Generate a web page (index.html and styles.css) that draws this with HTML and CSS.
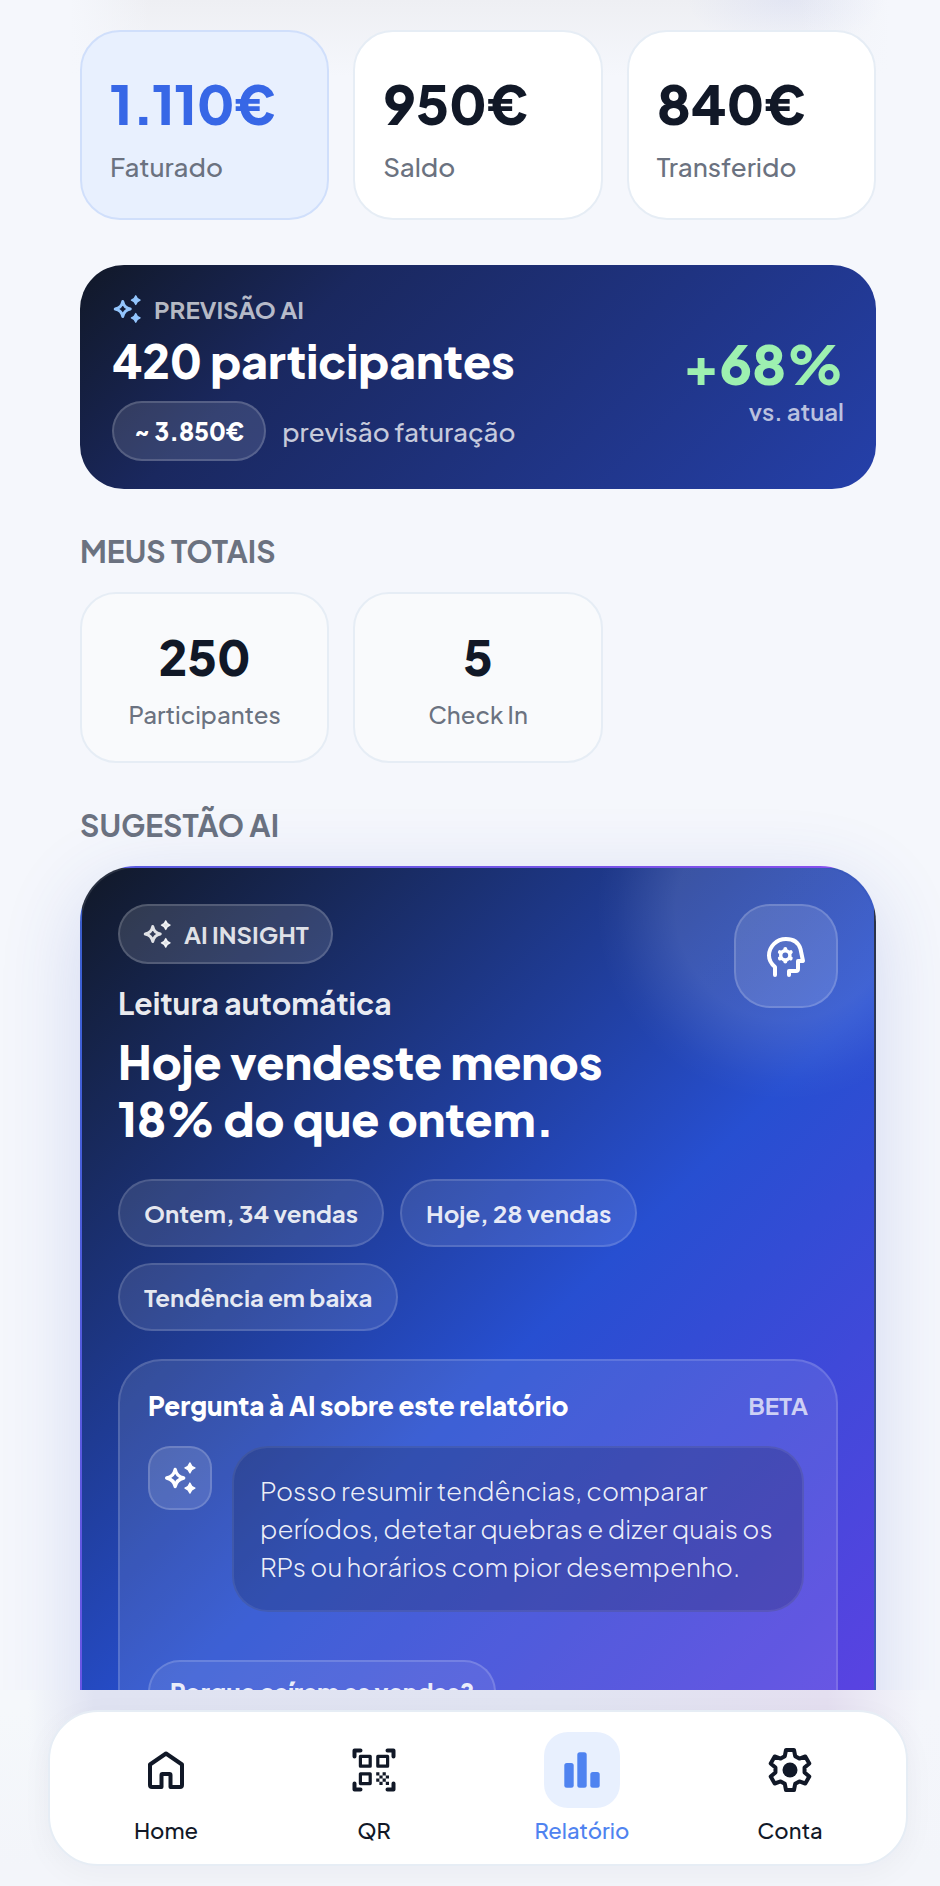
FILE: index.html
```html
<!DOCTYPE html>
<html lang="pt">
<head>
  <meta charset="UTF-8" />
  <meta name="viewport" content="width=device-width, initial-scale=1.0"/>
  <title>Relatório</title>
  <link rel="stylesheet" href="styles.css">
</head>
<body>

  <svg class="sprite" aria-hidden="true">
    <symbol id="sparkles" viewBox="0 0 24 24">
      <path d="M8.6 6 Q9.6 11 14.6 12 Q9.6 13 8.6 18 Q7.6 13 2.6 12 Q7.6 11 8.6 6Z" fill="none" stroke="currentColor" stroke-width="2.4" stroke-linejoin="round"/>
      <path d="M19 1.4 Q19.8 4.1 22.5 4.9 Q19.8 5.7 19 8.4 Q18.2 5.7 15.5 4.9 Q18.2 4.1 19 1.4Z M19 15.6 Q19.8 18.3 22.5 19.1 Q19.8 19.9 19 22.6 Q18.2 19.9 15.5 19.1 Q18.2 18.3 19 15.6Z" fill="currentColor" stroke="currentColor" stroke-width="1" stroke-linejoin="round"/>
    </symbol>
  </svg>

  <main class="content">
    <section class="stats">
      <div class="stat active">
        <strong>1.110€</strong>
        <span>Faturado</span>
      </div>
      <div class="stat">
        <strong>950€</strong>
        <span>Saldo</span>
      </div>
      <div class="stat">
        <strong>840€</strong>
        <span>Transferido</span>
      </div>
    </section>

    <section class="forecast">
      <div class="forecast-main">
        <div class="forecast-label">
          <svg class="icon-sm"><use href="#sparkles"/></svg>
          PREVISÃO AI
        </div>
        <div class="forecast-title">420 participantes</div>
        <div class="forecast-row">
          <span class="money">~ 3.850€</span>
          <span class="forecast-note">previsão faturação</span>
        </div>
      </div>
      <div class="forecast-side">
        <strong>+68%</strong>
        <span>vs. atual</span>
      </div>
    </section>

    <h2 class="section-title">MEUS TOTAIS</h2>
    <section class="totals">
      <div class="total">
        <strong>250</strong>
        <span>Participantes</span>
      </div>
      <div class="total">
        <strong>5</strong>
        <span>Check In</span>
      </div>
    </section>

    <h2 class="section-title">SUGESTÃO AI</h2>
    <section class="insight">
      <div class="insight-head">
        <div class="insight-text">
          <span class="insight-tag">
            <svg class="icon-sm"><use href="#sparkles"/></svg>
            AI INSIGHT
          </span>
          <p class="insight-sub">Leitura automática</p>
          <h3>Hoje vendeste menos 18% do que ontem.</h3>
        </div>
        <div class="insight-icon">
          <svg viewBox="0 0 50 50" fill="none" stroke="#fff" stroke-width="4" stroke-linecap="round" stroke-linejoin="round">
            <path d="M14 44V36Q8 31 8 24.500A17 16.500 0 0 1 25 8Q36.500 8 39.500 18L42 30H37V38Q37 40 35 40H28V44"/>
            <circle cx="24.300" cy="24.300" r="4.600" stroke-width="3.400"/>
            <path stroke-width="4" d="M24.300 18.300V18M24.300 30.300V30.600M19.100 21.300L18.900 21.200M29.500 21.300L29.700 21.200M19.100 27.300L18.900 27.400M29.500 27.300L29.700 27.400"/>
          </svg>
        </div>
      </div>

      <div class="chips">
        <span class="chip">Ontem, 34 vendas</span>
        <span class="chip">Hoje, 28 vendas</span>
        <span class="chip">Tendência em baixa</span>
      </div>

      <div class="ask">
        <div class="ask-head">
          <strong>Pergunta à AI sobre este relatório</strong>
          <span>BETA</span>
        </div>
        <div class="chat">
          <div class="avatar">
            <svg class="icon-md"><use href="#sparkles"/></svg>
          </div>
          <p class="bubble">Posso resumir tendências, comparar períodos, detetar quebras e dizer quais os RPs ou horários com pior desempenho.</p>
        </div>
        <button type="button" class="question">Porque caíram as vendas?</button>
      </div>
    </section>
  </main>

  <footer class="bottom">
    <nav class="nav">
      <a href="#home">
        <span class="nav-icon">
          <svg viewBox="0 0 48 48" fill="none" stroke="currentColor" stroke-width="4" stroke-linejoin="round">
            <path d="M8 18.500L24 7.500L40 18.500V39Q40 41 38 41H28.500V29Q28.500 28 27.500 28H20.500Q19.500 28 19.500 29V41H10Q8 41 8 39Z"/>
          </svg>
        </span>
        Home
      </a>
      <a href="#qr">
        <span class="nav-icon">
          <svg viewBox="0 0 48 48" fill="none" stroke="currentColor" stroke-width="4" stroke-linecap="round" stroke-linejoin="round">
            <path d="M4.500 10.500V4.500H10.500M37.500 4.500H43.500V10.500M43.500 37.500V43.500H37.500M10.500 43.500H4.500V37.500"/>
            <g stroke-width="3.200">
              <rect x="10.400" y="10.400" width="9.800" height="9.800"/>
              <rect x="27.800" y="10.400" width="9.800" height="9.800"/>
              <rect x="10.400" y="27.800" width="9.800" height="9.800"/>
            </g>
            <path stroke="none" fill="currentColor" d="M26.200 26.200h3.200v3.200h-3.200zM32.600 26.200h3.200v3.200h-3.200zM29.400 29.400h3.200v3.200h-3.200zM35.800 29.400h3.200v3.200h-3.200zM26.200 32.600h3.200v3.200h-3.200zM32.600 32.600h3.200v3.200h-3.200zM29.400 35.800h3.200v3.200h-3.200zM35.800 35.800h3.200v3.200h-3.200z"/>
          </svg>
        </span>
        QR
      </a>
      <a href="#relatorio" class="current">
        <span class="nav-icon">
          <svg viewBox="0 0 48 48" fill="currentColor">
            <rect x="6.300" y="17" width="9.400" height="24.700" rx="2.500"/>
            <rect x="19.300" y="6.300" width="9.400" height="35.400" rx="2.500"/>
            <rect x="32.300" y="26" width="9.400" height="15.700" rx="2.500"/>
          </svg>
        </span>
        Relatório
      </a>
      <a href="#conta">
        <span class="nav-icon">
          <svg viewBox="-24 -24 48 48" fill="none" stroke="currentColor" stroke-width="4" stroke-linejoin="round">
            <path d="M-4 -20H4L5.200 -13.800L9.350 -11.400L15.300 -13.500L19.300 -6.500L14.550 -2.400V2.400L19.300 6.500L15.300 13.500L9.350 11.400L5.200 13.800L4 20H-4L-5.200 13.800L-9.350 11.400L-15.300 13.500L-19.300 6.500L-14.550 2.400V-2.400L-19.300 -6.500L-15.300 -13.500L-9.350 -11.400L-5.200 -13.800Z"/>
            <circle r="7.500" fill="currentColor" stroke="none"/>
          </svg>
        </span>
        Conta
      </a>
    </nav>
  </footer>

</body>
</html>
```

FILE: styles.css
```css
* {
  box-sizing: border-box;
}

body {
  display: flex;
  flex-direction: column;
  margin: 0;
  height: 100vh;
  overflow: hidden;
  font-family: "Plus Jakarta Sans", Inter, sans-serif;
  background: #f5f7fc;
  color: #111827;
}

h2, h3, p {
  margin: 0;
}

.sprite {
  display: none;
}

.content {
  flex: 1;
  min-height: 0;
  padding: 30px 64px 60px 80px;
  overflow-y: auto;
  scrollbar-width: none;
  background:
    radial-gradient(ellipse 100px 48px at 786px 0, rgba(80, 110, 240, 0.07), transparent),
    linear-gradient(90deg, #f5f7fc 70px, transparent 150px, transparent 800px, #f5f7fc 890px) 0 0 / 100% 76px no-repeat,
    linear-gradient(#eeeff3, #f5f7fc) 0 0 / 100% 76px no-repeat;
}

/* top numbers */

.stats,
.totals {
  display: grid;
  grid-template-columns: repeat(3, 1fr);
  gap: 24px;
}

.stat {
  display: flex;
  flex-direction: column;
  gap: 12px;
  padding: 35px 28px;
  border: 2px solid #e6edf5;
  border-radius: 40px;
  background: #fff;
}

.stat strong {
  font-size: 54px;
  font-weight: 800;
  line-height: 72px;
}

.stat span {
  font-size: 26px;
  font-weight: 500;
  line-height: 32px;
  color: #6b7280;
}

.stat.active {
  background: #e8f0fe;
  border-color: #d0dffb;
}

.stat.active strong {
  color: #3767e6;
}

/* forecast */

.forecast {
  display: flex;
  justify-content: space-between;
  align-items: center;
  margin-top: 45px;
  padding: 28px 32px;
  border-radius: 44px;
  background: linear-gradient(135deg, #111827, #1a285f 28%, #2540aa);
  color: #fff;
}

.forecast-label {
  display: flex;
  align-items: center;
  gap: 12px;
  font-size: 24px;
  font-weight: 700;
  line-height: 32px;
  color: rgba(255, 255, 255, 0.7);
}

.icon-sm {
  width: 30px;
  height: 30px;
}

.icon-md {
  width: 34px;
  height: 34px;
}

.forecast-label svg {
  color: #93c5fd;
}

.forecast-title {
  margin-top: 4px;
  font-size: 46px;
  font-weight: 800;
  line-height: 62px;
}

.forecast-row {
  display: flex;
  align-items: center;
  gap: 16px;
  margin-top: 10px;
}

.money {
  padding: 0 20px;
  border: 2px solid rgba(255, 255, 255, 0.16);
  border-radius: 30px;
  background: rgba(255, 255, 255, 0.12);
  font-size: 24px;
  font-weight: 800;
  line-height: 56px;
}

.forecast-note {
  font-size: 26px;
  font-weight: 500;
  color: rgba(255, 255, 255, 0.75);
}

.forecast-side {
  display: flex;
  flex-direction: column;
  gap: 4px;
  padding-top: 8px;
  text-align: right;
}

.forecast-side strong {
  font-size: 54px;
  font-weight: 800;
  line-height: 56px;
  color: #9df0b0;
}

.forecast-side span {
  font-size: 24px;
  font-weight: 600;
  line-height: 32px;
  color: rgba(255, 255, 255, 0.7);
}

/* totals */

.section-title {
  margin: 42px 0 21px;
  font-size: 30px;
  font-weight: 700;
  line-height: 40px;
  color: #6b7280;
}

.total {
  display: flex;
  flex-direction: column;
  gap: 12px;
  padding: 33px 12px 32px;
  border: 2px solid #e6edf5;
  border-radius: 36px;
  background: #f9fafc;
  text-align: center;
}

.total strong {
  font-size: 48px;
  font-weight: 800;
  line-height: 60px;
}

.total span {
  font-size: 24px;
  font-weight: 500;
  line-height: 30px;
  color: #6b7280;
}

/* AI card */

.insight {
  position: relative;
  min-height: 1300px;
  padding: 36px;
  border: 2px solid rgba(255, 255, 255, 0.1);
  border-radius: 56px;
  background: linear-gradient(135deg, #111827, #274fd1 44%, #7c3aed);
  box-shadow: 0 20px 80px rgba(50, 75, 190, 0.18);
  color: #fff;
}

/* soft light in the corner */
.insight::before {
  content: "";
  position: absolute;
  inset: 0;
  border-radius: 54px;
  background: radial-gradient(circle at calc(100% - 88px) 42px, rgba(255, 255, 255, 0.12) 110px, rgba(255, 255, 255, 0.07) 140px, rgba(255, 255, 255, 0.02) 170px, transparent 190px);
}

.insight > * {
  position: relative;
}

.insight-head {
  display: flex;
  justify-content: space-between;
  align-items: flex-start;
}

.insight-text {
  max-width: 540px;
}

.insight-tag {
  display: inline-flex;
  align-items: center;
  gap: 12px;
  padding: 0 22px;
  border: 2px solid rgba(255, 255, 255, 0.16);
  border-radius: 30px;
  background: rgba(255, 255, 255, 0.13);
  font-size: 24px;
  font-weight: 700;
  line-height: 56px;
  color: rgba(255, 255, 255, 0.85);
  vertical-align: top;
}

.insight-sub {
  margin-top: 19px;
  font-size: 30px;
  font-weight: 700;
  line-height: 40px;
  color: rgba(255, 255, 255, 0.92);
}

.insight h3 {
  margin-top: 10px;
  font-size: 46px;
  font-weight: 800;
  line-height: 57px;
}

.insight-icon {
  display: flex;
  align-items: center;
  justify-content: center;
  width: 104px;
  height: 104px;
  border: 2px solid rgba(255, 255, 255, 0.16);
  border-radius: 36px;
  background: rgba(255, 255, 255, 0.12);
}

.insight-icon svg {
  width: 50px;
  height: 50px;
}

.chips {
  display: flex;
  flex-wrap: wrap;
  gap: 16px;
  margin-top: 32px;
}

.chip {
  padding: 0 24px;
  border: 2px solid rgba(255, 255, 255, 0.14);
  border-radius: 34px;
  background: rgba(255, 255, 255, 0.1);
  font-size: 24px;
  font-weight: 700;
  line-height: 64px;
  color: rgba(255, 255, 255, 0.88);
}

.ask {
  margin-top: 28px;
  padding: 24px 28px 28px;
  min-height: 600px;
  border: 2px solid rgba(255, 255, 255, 0.14);
  border-radius: 44px;
  background: rgba(255, 255, 255, 0.1);
}

.ask-head {
  display: flex;
  justify-content: space-between;
  line-height: 41px;
}

.ask-head strong {
  font-size: 26px;
  font-weight: 800;
}

.ask-head span {
  font-size: 24px;
  font-weight: 700;
  color: rgba(255, 255, 255, 0.72);
}

.chat {
  display: flex;
  align-items: flex-start;
  gap: 20px;
  margin: 20px 4px 48px 0;
}

.avatar {
  display: flex;
  flex: none;
  align-items: center;
  justify-content: center;
  width: 64px;
  height: 64px;
  border: 2px solid rgba(255, 255, 255, 0.16);
  border-radius: 22px;
  background: rgba(255, 255, 255, 0.13);
}

.bubble {
  padding: 24px 26px;
  border: 2px solid rgba(255, 255, 255, 0.08);
  border-radius: 36px;
  background: rgba(17, 24, 60, 0.24);
  font-size: 26px;
  font-weight: 300;
  line-height: 38px;
  color: rgba(255, 255, 255, 0.92);
}

.question {
  height: 64px;
  padding: 0 20px;
  border: 2px solid rgba(255, 255, 255, 0.16);
  border-radius: 32px;
  background: rgba(255, 255, 255, 0.08);
  font-family: inherit;
  font-size: 24px;
  font-weight: 800;
  color: rgba(255, 255, 255, 0.88);
  cursor: pointer;
}

/* bottom navigation */

.bottom {
  flex: none;
  padding: 20px 32px 20px 48px;
  background:
    linear-gradient(rgba(243, 245, 250, 0) 20px, #f3f5fa 90%),
    linear-gradient(90deg, #f5f8fb 3%, #e0e3f2 10%, #e1e4f2 60%, #e4dff0 88%, #f4f6fb 98%);
}

.nav {
  display: grid;
  grid-template-columns: repeat(4, 1fr);
  padding: 20px 12px 19px;
  border: 2px solid #e6edf5;
  border-radius: 50px;
  background: #fff;
  box-shadow: 0 8px 32px rgba(17, 24, 39, 0.04);
}

.nav a {
  display: flex;
  flex-direction: column;
  align-items: center;
  gap: 7px;
  font-size: 22px;
  font-weight: 500;
  line-height: 30px;
  color: #111827;
  text-decoration: none;
}

.nav-icon {
  display: flex;
  align-items: center;
  justify-content: center;
  width: 76px;
  height: 76px;
  border-radius: 24px;
}

.nav-icon svg {
  width: 48px;
  height: 48px;
}

.nav a.current {
  color: #4f83f0;
}

.nav a.current .nav-icon {
  background: #e8f0fe;
}
```
